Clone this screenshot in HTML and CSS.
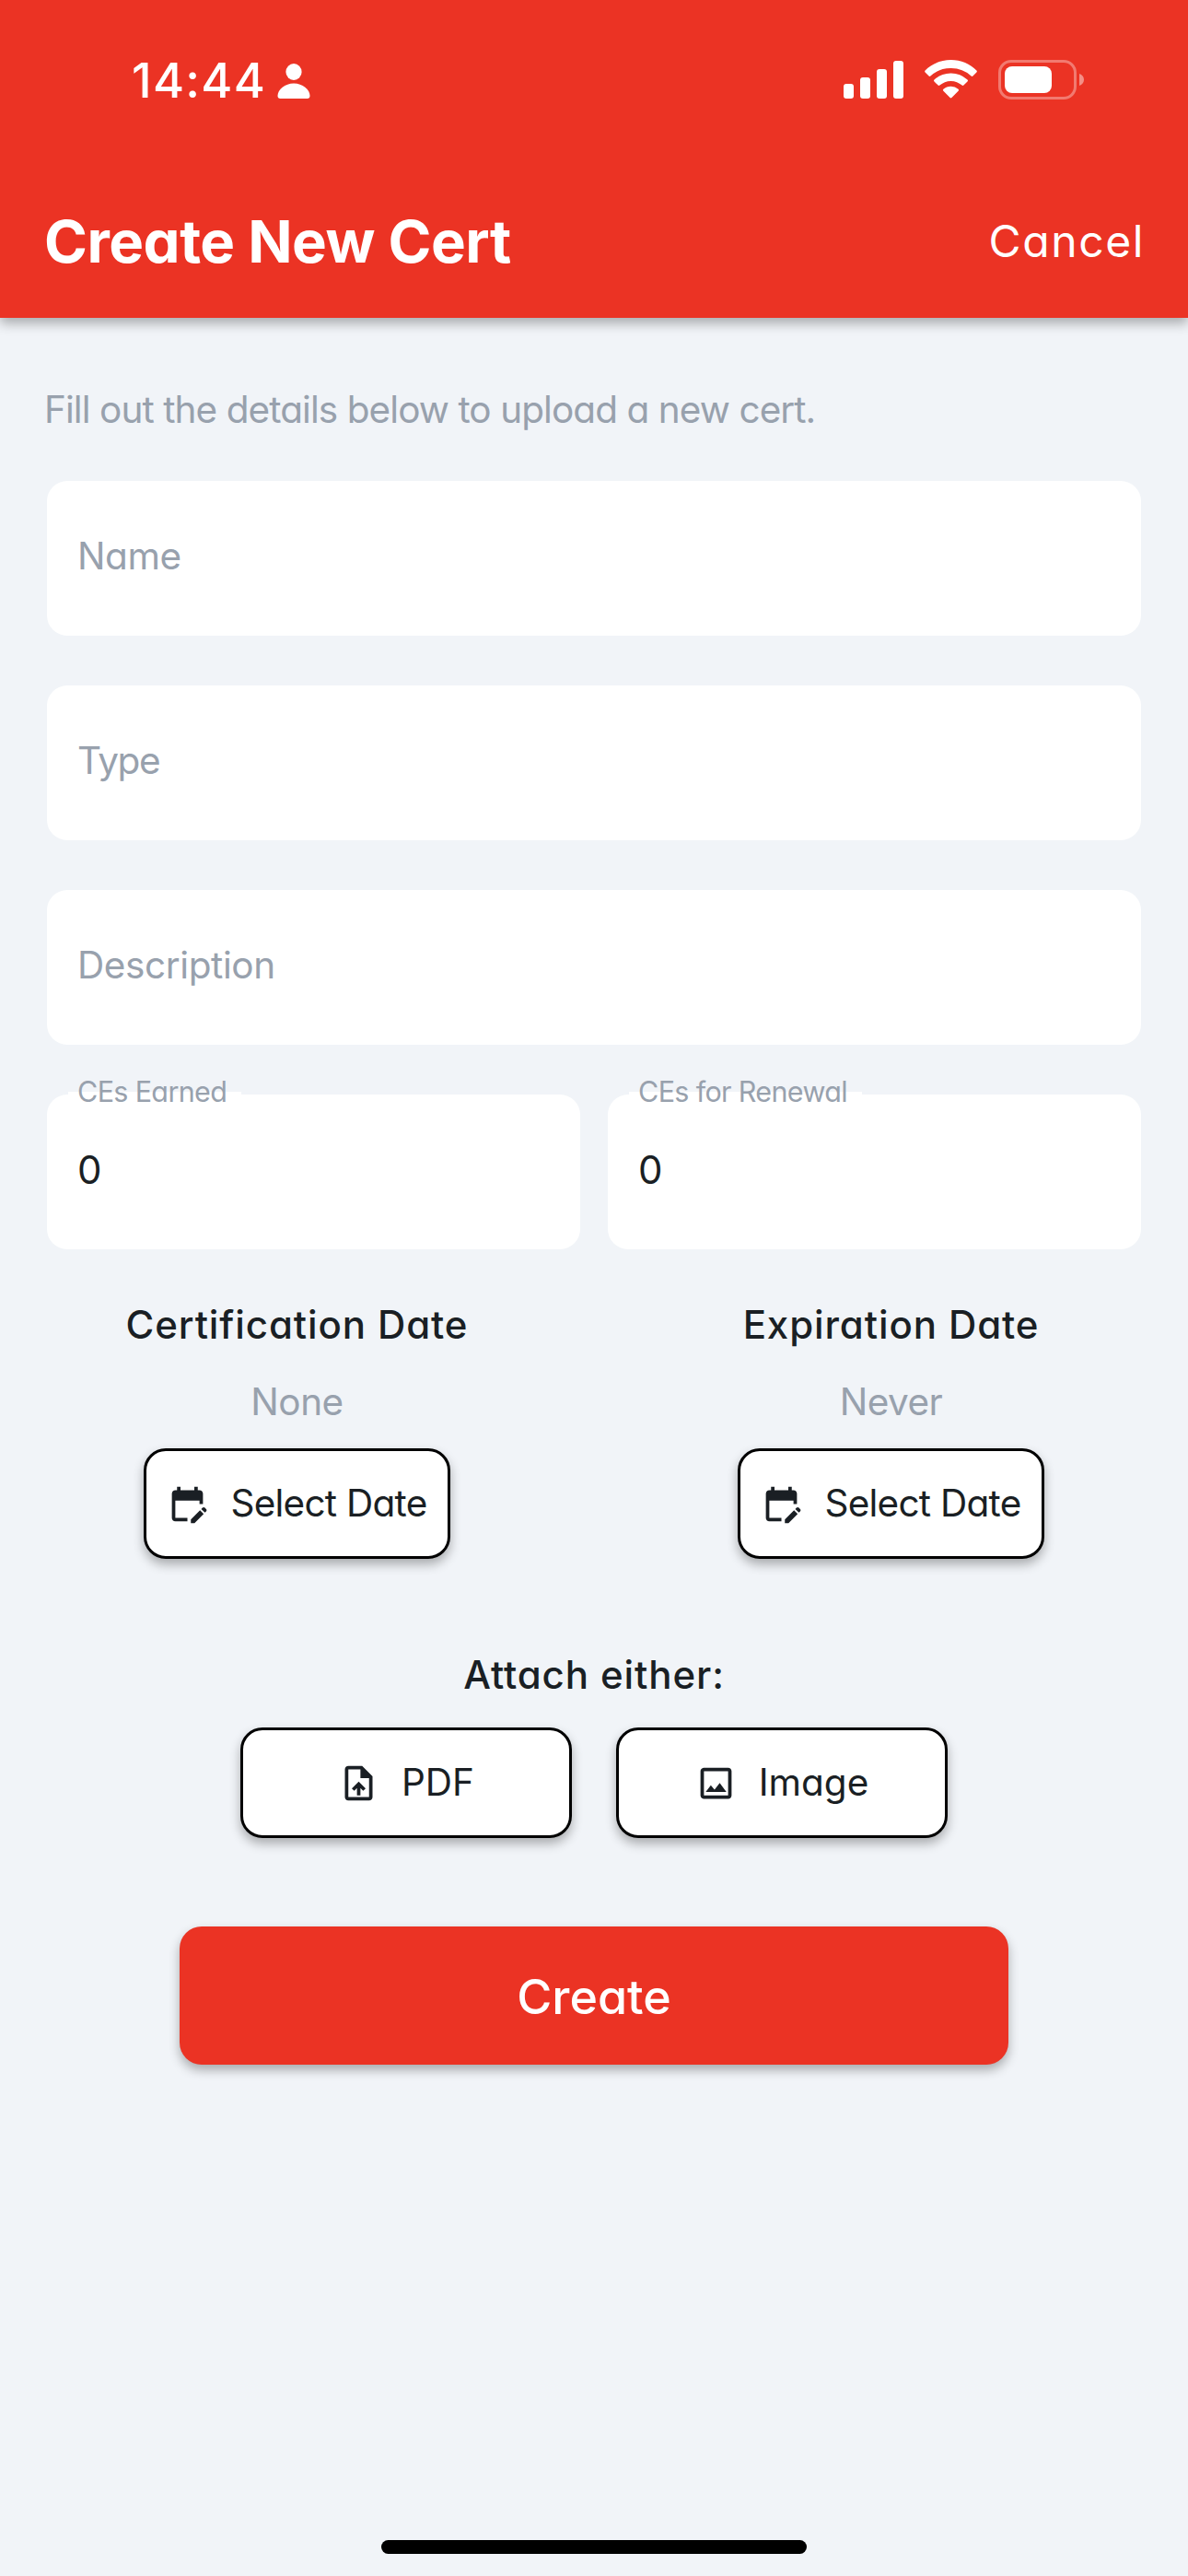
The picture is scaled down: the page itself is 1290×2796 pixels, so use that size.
FILE: index.html
```html
<!DOCTYPE html>
<html lang="en">
<head>
<meta charset="utf-8">
<title>Create New Cert</title>
<link rel="stylesheet" href="styles.css">
</head>
<body>
<div class="screen">
  <header class="app-header">
    <div class="status-bar">
      <div class="status-left">
        <span class="time">14:44</span>
        <svg class="person" viewBox="0 0 36 38"><ellipse cx="18" cy="9" rx="8.6" ry="9"/><path d="M18 21.500C8.500 21.500.5 28 .5 35c0 2 1 3 3 3h29c2 0 3-1 3-3C35.500 28 27.500 21.500 18 21.500Z"/></svg>
      </div>
      <div class="status-right">
        <svg class="signal" viewBox="0 0 65 41"><rect x="0" y="25" width="11" height="16" rx="3"/><rect x="18" y="18" width="11" height="23" rx="3"/><rect x="36" y="9" width="11" height="32" rx="3"/><rect x="54" y="0" width="11" height="41" rx="3"/></svg>
        <svg class="wifi" viewBox="0 0 57 42"><path d="M28.500 0C17.500 0 7.500 4.400.6 11.500q-.9 1 0 2l4 4q.9.800 1.800 0A32 32 0 0 1 28.500 9a32 32 0 0 1 22.100 8.500q.9.800 1.800 0l4-4q.9-1 0-2C49.500 4.400 39.500 0 28.500 0Z"/><path d="M28.500 14.500c-7 0-13.300 2.700-18 7.100q-1 1 0 2l4.100 4q.9.800 1.800 0a18 18 0 0 1 24.200 0q.9.800 1.800 0l4.100-4q1-1 0-2a26.300 26.300 0 0 0-18-7.100Z"/><path d="M28.500 28.800c-3.100 0-5.900 1.100-8.100 2.900q-1.100 1 0 2.100l7.200 7.300q.9.900 1.800 0l7.200-7.300q1.100-1.100 0-2.100a12.500 12.500 0 0 0-8.100-2.900Z"/></svg>
        <svg class="battery" viewBox="0 0 93 43"><rect x="1.500" y="1.500" width="82" height="40" rx="12.500" fill="none" stroke="#fff" stroke-opacity=".35" stroke-width="3"/><path d="M88 15c3 1 5 3.500 5 6.500S91 27 88 28Z" fill-opacity=".45"/><rect x="7" y="7" width="51" height="29" rx="8"/></svg>
      </div>
    </div>
    <div class="title-bar">
      <h1 class="title">Create New Cert</h1>
      <a class="cancel">Cancel</a>
    </div>
  </header>
  <main class="form">
    <p class="intro">Fill out the details below to upload a new cert.</p>
    <div class="fields">
      <div class="field"><span class="placeholder">Name</span></div>
      <div class="field"><span class="placeholder placeholder-type">Type</span></div>
      <div class="field"><span class="placeholder">Description</span></div>
      <div class="field-pair">
        <div class="field"><span class="float-label">CEs Earned</span><span class="value">0</span></div>
        <div class="field"><span class="float-label">CEs for Renewal</span><span class="value">0</span></div>
      </div>
    </div>
    <div class="dates">
      <section class="date">
        <h2 class="heading">Certification Date</h2>
        <p class="date-value">None</p>
        <button class="btn btn-date"><svg class="icon" viewBox="0 0 24 24"><path d="M12 22H5c-1.110 0-2-.9-2-2L3.010 6c0-1.100.88-2 1.990-2h1V2h2v2h8V2h2v2h1c1.100 0 2 .9 2 2v6h-2v-2H5v10h7v2zm10.130-5.010.71-.71c.39-.39.39-1.020 0-1.410l-.71-.71c-.39-.39-1.020-.39-1.410 0l-.71.71 2.120 2.120zm-.71.71-5.300 5.300H14v-2.120l5.300-5.300 2.120 2.120z"/></svg><span>Select Date</span></button>
      </section>
      <section class="date">
        <h2 class="heading">Expiration Date</h2>
        <p class="date-value">Never</p>
        <button class="btn btn-date"><svg class="icon" viewBox="0 0 24 24"><path d="M12 22H5c-1.110 0-2-.9-2-2L3.010 6c0-1.100.88-2 1.990-2h1V2h2v2h8V2h2v2h1c1.100 0 2 .9 2 2v6h-2v-2H5v10h7v2zm10.130-5.010.71-.71c.39-.39.39-1.020 0-1.410l-.71-.71c-.39-.39-1.020-.39-1.410 0l-.71.71 2.120 2.120zm-.71.71-5.300 5.300H14v-2.120l5.300-5.300 2.120 2.120z"/></svg><span>Select Date</span></button>
      </section>
    </div>
    <section class="attach">
      <h2 class="heading">Attach either:</h2>
      <div class="attach-buttons">
        <button class="btn btn-attach"><svg class="icon" viewBox="0 0 24 24"><path d="M14 2H6c-1.100 0-1.990.9-1.990 2L4 20c0 1.100.89 2 1.990 2H18c1.100 0 2-.9 2-2V8l-6-6zm4 18H6V4h7v5h5v11zM8 15.010l1.410 1.410L11 14.840V19h2v-4.160l1.590 1.590L16 15.010 12.010 11 8 15.010z"/></svg><span>PDF</span></button>
        <button class="btn btn-attach"><svg class="icon" viewBox="0 0 24 24"><path d="M19 5v14H5V5h14m0-2H5c-1.100 0-2 .9-2 2v14c0 1.100.9 2 2 2h14c1.100 0 2-.9 2-2V5c0-1.100-.9-2-2-2zm-4.860 8.860l-3 3.870L9 13.140 6 17h12l-3.860-5.140z"/></svg><span>Image</span></button>
      </div>
    </section>
    <button class="create">Create</button>
  </main>
  <div class="home-indicator"></div>
</div>
</body>
</html>
```

FILE: styles.css
```css
* { box-sizing: border-box; margin: 0; padding: 0; }

body {
  background: #f1f4f8;
  color: #1a1f24;
  font-family: Inter, "Liberation Sans", sans-serif;
  font-feature-settings: "cv11";
  font-size: 40.5px;
  font-weight: 400;
  line-height: 50px;
}

.screen {
  display: flex;
  flex-direction: column;
  width: 1290px;
  height: 2796px;
}

/* Header */
.app-header {
  height: 345px;
  background: #eb3324;
  color: #fff;
  box-shadow: 0 6px 12px rgba(0, 0, 0, .3);
}

.status-bar {
  display: flex;
  justify-content: space-between;
  height: 176px;
  padding: 65px 113px 0 143px;
}

.status-left, .status-right { display: flex; fill: #fff; }
.status-left { gap: 12px; }
.time { font-size: 52px; font-weight: 500; line-height: 46px; letter-spacing: 1.3px; }
.person { width: 36px; height: 38px; margin-top: 4px; }
.status-right { gap: 23px; }
.signal { width: 65px; height: 41px; margin-top: 1px; }
.wifi { width: 57px; height: 42px; }
.battery { width: 93px; height: 43px; }

.title-bar {
  display: flex;
  justify-content: space-between;
  align-items: center;
  height: 172px;
  padding: 0 47px 0 48px;
}
.title { font-size: 63.5px; font-weight: 700; line-height: 80px; letter-spacing: -.5px; }
.cancel { font-size: 48px; font-weight: 400; letter-spacing: 1.6px; }

/* Form */
.form { flex: 1; padding: 75px 51px 0; }
.intro { margin-left: -3px; color: #98a1ad; letter-spacing: -.93px; }
.fields { display: grid; gap: 54px; margin-top: 52px; }
.field {
  position: relative;
  height: 168px;
  padding: 57px 33px 0;
  border-radius: 22px;
  background: #fff;
}
.field-pair { display: grid; grid-template-columns: 1fr 1fr; gap: 30px; }
.placeholder { color: #98a1ad; letter-spacing: -.4px; }
.placeholder-type { letter-spacing: -1.4px; }
.float-label {
  position: absolute;
  left: 23px;
  top: -3px;
  height: 6px;
  padding: 0 16px 0 10px;
  background: #fff;
  color: #98a1ad;
  font-size: 30.5px;
  line-height: 0;
  letter-spacing: -.65px;
}
.value { font-size: 42px; }

/* Dates */
.dates {
  display: grid;
  grid-template-columns: 1fr 1fr;
  margin: 57px -51px 0;
}
.date { display: flex; flex-direction: column; align-items: center; }
.heading { font-size: 42px; font-weight: 500; letter-spacing: .9px; }
.date-value { margin: 34px 0 25px; color: #98a1ad; letter-spacing: -.5px; }

.btn {
  display: flex;
  align-items: center;
  justify-content: center;
  height: 120px;
  border: 3px solid #000;
  border-radius: 24px;
  background: #fff;
  color: inherit;
  font: inherit;
  font-feature-settings: inherit;
  box-shadow: 0 6px 12px rgba(0, 0, 0, .3);
}
.icon { width: 45px; height: 45px; fill: currentColor; }
.btn-date { width: 333px; gap: 24px; letter-spacing: -.75px; }

/* Attachments */
.attach {
  display: flex;
  flex-direction: column;
  align-items: center;
  margin-top: 101px;
}
.attach-buttons { display: flex; gap: 48px; margin-top: 32px; }
.btn-attach { width: 360px; gap: 24px; }

.create {
  display: block;
  width: 900px;
  height: 150px;
  margin: 96px auto 0;
  padding-top: 3px;
  border: 0;
  border-radius: 24px;
  background: #eb3324;
  color: #fff;
  font: 500 52px/60px Inter, "Liberation Sans", sans-serif;
  font-feature-settings: inherit;
  box-shadow: 0 6px 12px rgba(0, 0, 0, .3);
}

.home-indicator {
  align-self: center;
  width: 462px;
  height: 15px;
  margin-bottom: 24px;
  border-radius: 8px;
  background: #000;
}
```
